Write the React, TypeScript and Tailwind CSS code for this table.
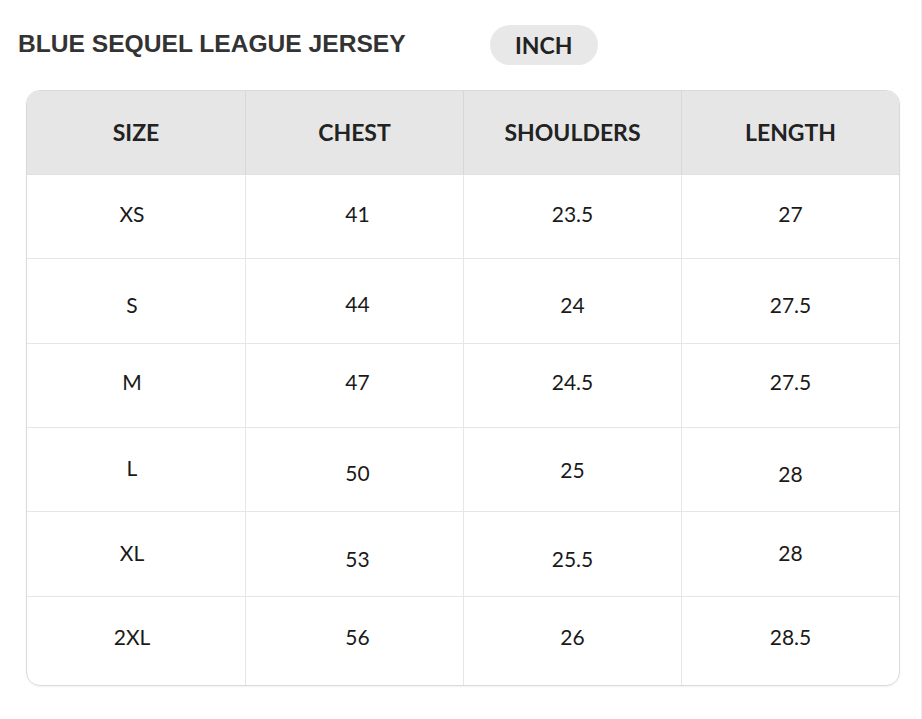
import React from "react";

type Cell = { v: string; off: string };

const rows: { h: string; cells: Cell[] }[] = [
  {
    h: "h-[84px]",
    cells: [
      { v: "XS", off: "-translate-y-[3px]" },
      { v: "41", off: "-translate-y-[3px]" },
      { v: "23.5", off: "-translate-y-[3px]" },
      { v: "27", off: "-translate-y-[3px]" },
    ],
  },
  {
    h: "h-[85px]",
    cells: [
      { v: "S", off: "translate-y-[3px]" },
      { v: "44", off: "translate-y-[2px]" },
      { v: "24", off: "translate-y-[3px]" },
      { v: "27.5", off: "translate-y-[3px]" },
    ],
  },
  {
    h: "h-[84px]",
    cells: [
      { v: "M", off: "-translate-y-[4px]" },
      { v: "47", off: "-translate-y-[4px]" },
      { v: "24.5", off: "-translate-y-[4px]" },
      { v: "27.5", off: "-translate-y-[4px]" },
    ],
  },
  {
    h: "h-[84px]",
    cells: [
      { v: "L", off: "-translate-y-[2px]" },
      { v: "50", off: "translate-y-[3px]" },
      { v: "25", off: "translate-y-[0px]" },
      { v: "28", off: "translate-y-[4px]" },
    ],
  },
  {
    h: "h-[85px]",
    cells: [
      { v: "XL", off: "-translate-y-[2px]" },
      { v: "53", off: "translate-y-[4px]" },
      { v: "25.5", off: "translate-y-[4px]" },
      { v: "28", off: "-translate-y-[2px]" },
    ],
  },
  {
    h: "h-[88px]",
    cells: [
      { v: "2XL", off: "-translate-y-[5px]" },
      { v: "56", off: "-translate-y-[5px]" },
      { v: "26", off: "-translate-y-[5px]" },
      { v: "28.5", off: "-translate-y-[5px]" },
    ],
  },
];

const heads = ["SIZE", "CHEST", "SHOULDERS", "LENGTH"];
const colPad = ["pr-[8px]", "pl-[6px]", "", ""];

export default function App() {
  return (
    <div className="w-[922px] h-[719px] bg-white border-r border-[#ececec] overflow-hidden">
      <div className="flex items-center pl-[18px] pt-[25px] h-[65px]">
        <h1
          className="text-[24.6px] font-bold text-[#333333] leading-none -translate-y-[1px]"
          style={{ fontFamily: '"Liberation Sans", Arial, sans-serif' }}
        >
          BLUE SEQUEL LEAGUE JERSEY
        </h1>
        <div
          className="ml-[84px] h-[40px] w-[108px] rounded-full bg-[#e8e8e8] flex items-center justify-center text-[23px] font-bold text-[#222222] leading-none"
          style={{ fontFamily: 'Lato, "Noto Sans", sans-serif' }}
        >
          INCH
        </div>
      </div>

      <div
        className="ml-[26px] mt-[25px] w-[874px] rounded-[14px] border border-[#dadada] overflow-hidden shadow-[0_1px_2px_rgba(0,0,0,0.06)]"
        style={{ fontFamily: 'Lato, "Noto Sans", sans-serif' }}
      >
        <div className="grid grid-cols-4 h-[84px] bg-[#e6e6e6] border-b border-[#e0e0e0]">
          {heads.map((h, i) => (
            <div
              key={h}
              className={
                "flex items-center justify-center text-[23px] font-bold text-[#222222] leading-none " +
                (i > 0 ? "border-l border-[#d8d8d8]" : "")
              }
            >
              {h}
            </div>
          ))}
        </div>
        {rows.map((r, ri) => (
          <div
            key={ri}
            className={
              "grid grid-cols-4 " +
              r.h +
              (ri < rows.length - 1 ? " border-b border-[#e6e6e6]" : "")
            }
          >
            {r.cells.map((c, ci) => (
              <div
                key={ci}
                className={
                  "flex items-center justify-center text-[21px] text-[#1a1a1a] leading-none " +
                  colPad[ci] +
                  (ci > 0 ? " border-l border-[#e6e6e6]" : "")
                }
              >
                <span className={c.off}>{c.v}</span>
              </div>
            ))}
          </div>
        ))}
      </div>
    </div>
  );
}
